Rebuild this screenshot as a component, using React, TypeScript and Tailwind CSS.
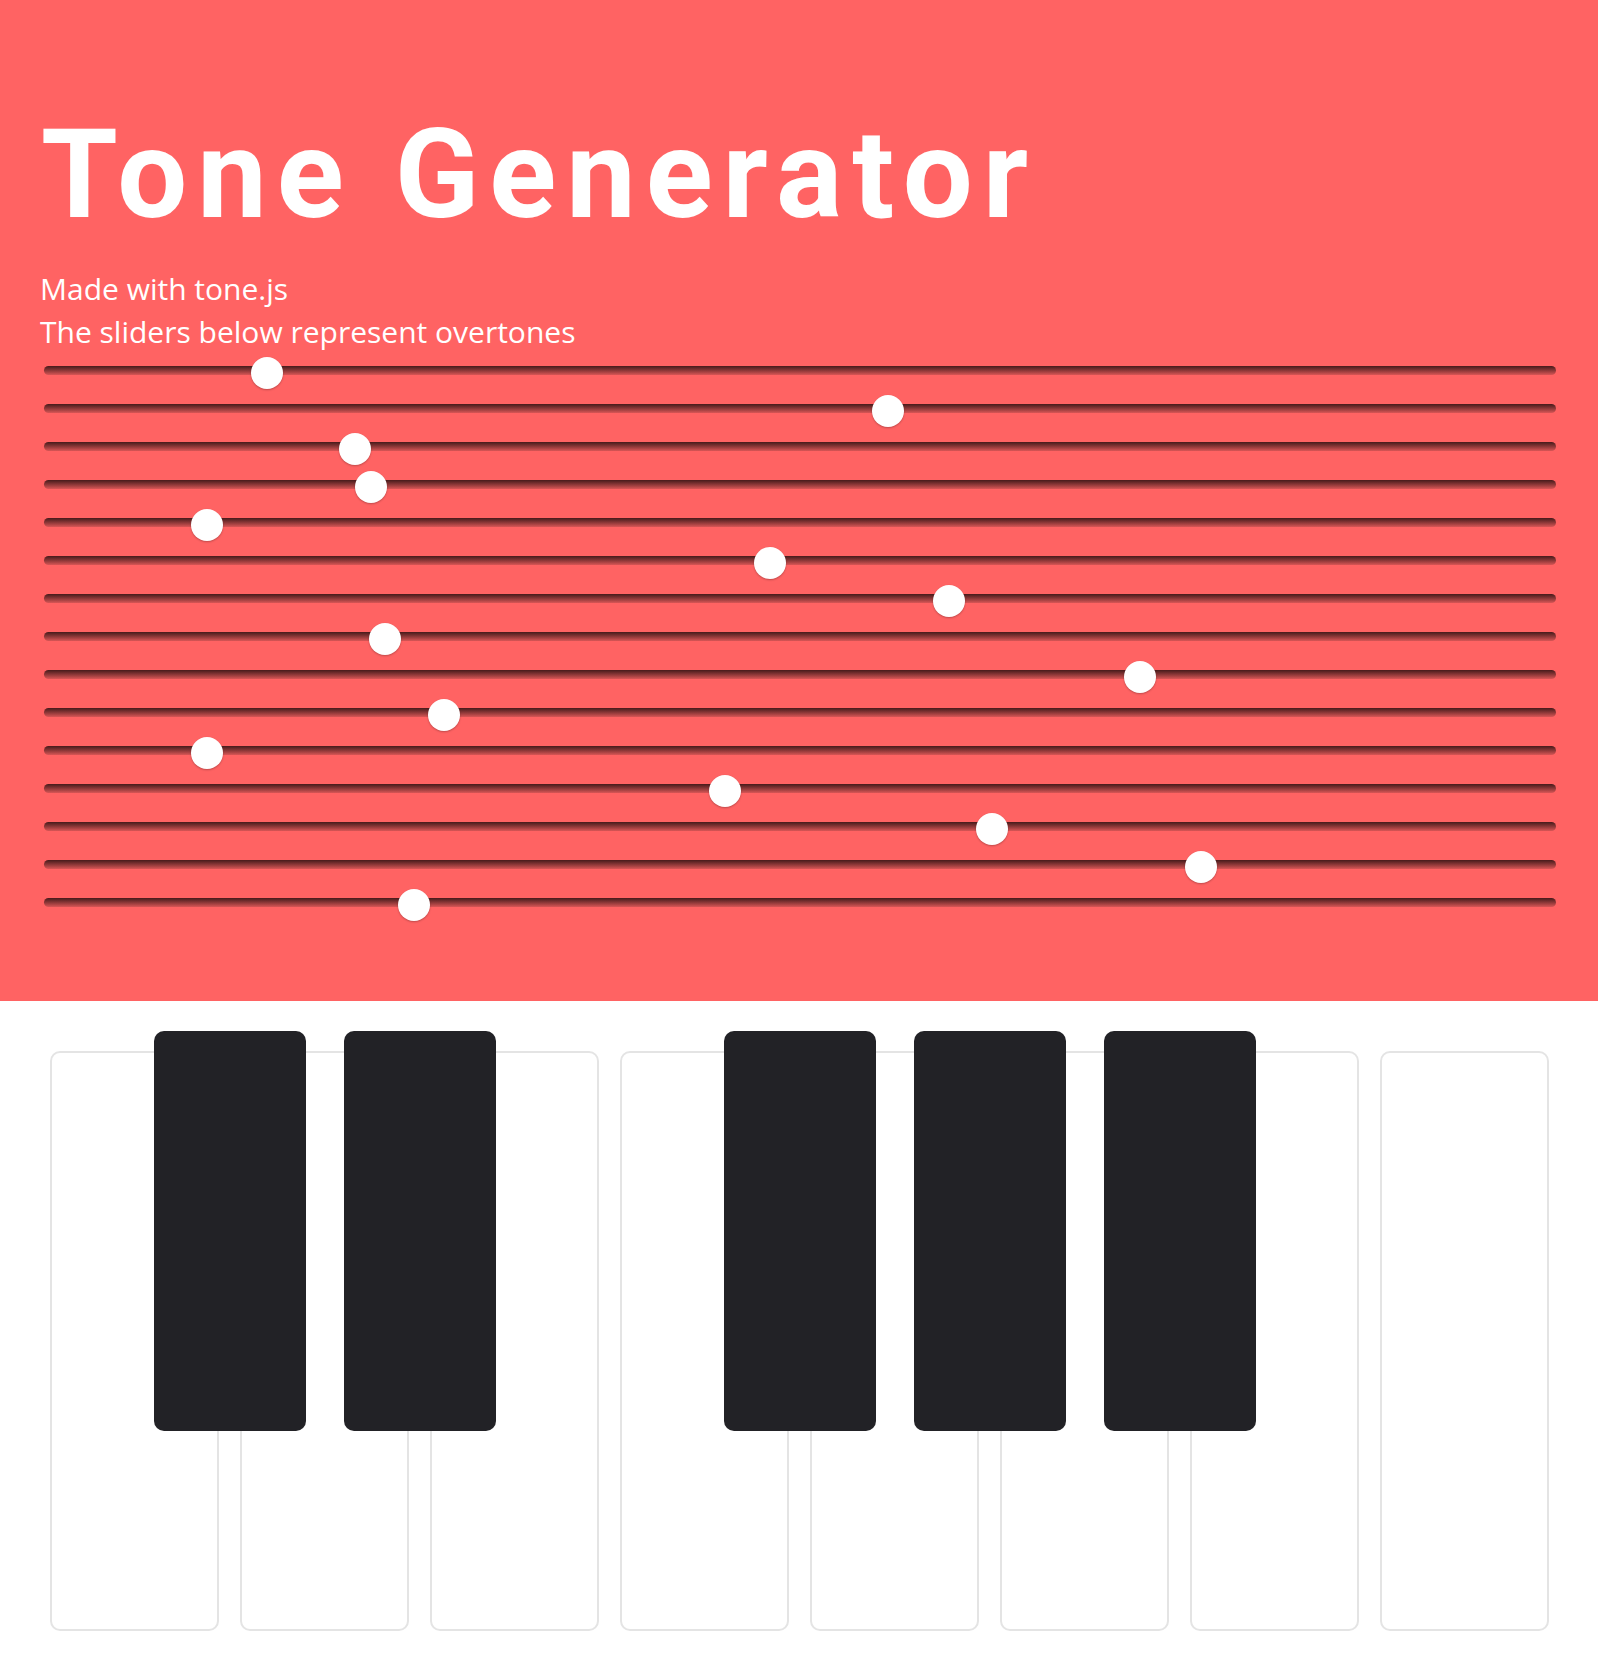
const overtones = [
  0.1399, 0.5597, 0.1993, 0.2101, 0.0993, 0.4797, 0.6007, 0.2196, 0.7297,
  0.2595, 0.0993, 0.4493, 0.6300, 0.7709, 0.2392,
];

// white keys C D E F G A B C, black key sits after these ones
const whiteKeys = [true, true, false, true, true, true, false, false];

function Slider({ value }: { value: number }) {
  return (
    <div className="h-[38px] pt-[13px]">
      <div className="relative h-[9px] rounded-full bg-linear-to-b from-[#471b1b] to-[#d95656]">
        <div
          className="absolute top-[-9px] h-[32px] w-[32px] rounded-full bg-white shadow-[0_1px_2px_rgba(0,0,0,0.25)]"
          style={{ left: `calc(${value} * (100% - 32px))` }}
        />
      </div>
    </div>
  );
}

export default function App() {
  return (
    <div className="min-h-[1666px] w-full bg-white">
      <section className="h-[1001px] bg-[#ff6363] pt-[113px]">
        <h1 className="pl-[41px] font-['Roboto',sans-serif] text-[124px] leading-none font-bold tracking-[10px] text-white">
          Tone Generator
        </h1>
        <div className="mt-[30px] pl-[40px] font-['Open_Sans',sans-serif] text-[30px] leading-[43px] text-white">
          <p>Made with tone.js</p>
          <p>The sliders below represent overtones</p>
        </div>
        <div className="ml-[44px] mr-[42px]">
          {overtones.map((v, i) => (
            <Slider key={i} value={v} />
          ))}
        </div>
      </section>

      <div className="flex gap-[21px] pt-[50px] pl-[50px] pr-[49px] pb-[35px]">
        {whiteKeys.map((hasBlack, i) => (
          <div
            key={i}
            className="relative h-[580px] flex-1 rounded-[10px] border-2 border-[#e4e4e4] bg-white"
          >
            {hasBlack && (
              <div className="absolute top-[-22px] right-[-89px] z-10 h-[400px] w-[152px] rounded-[10px] bg-[#222226]" />
            )}
          </div>
        ))}
      </div>
    </div>
  );
}
